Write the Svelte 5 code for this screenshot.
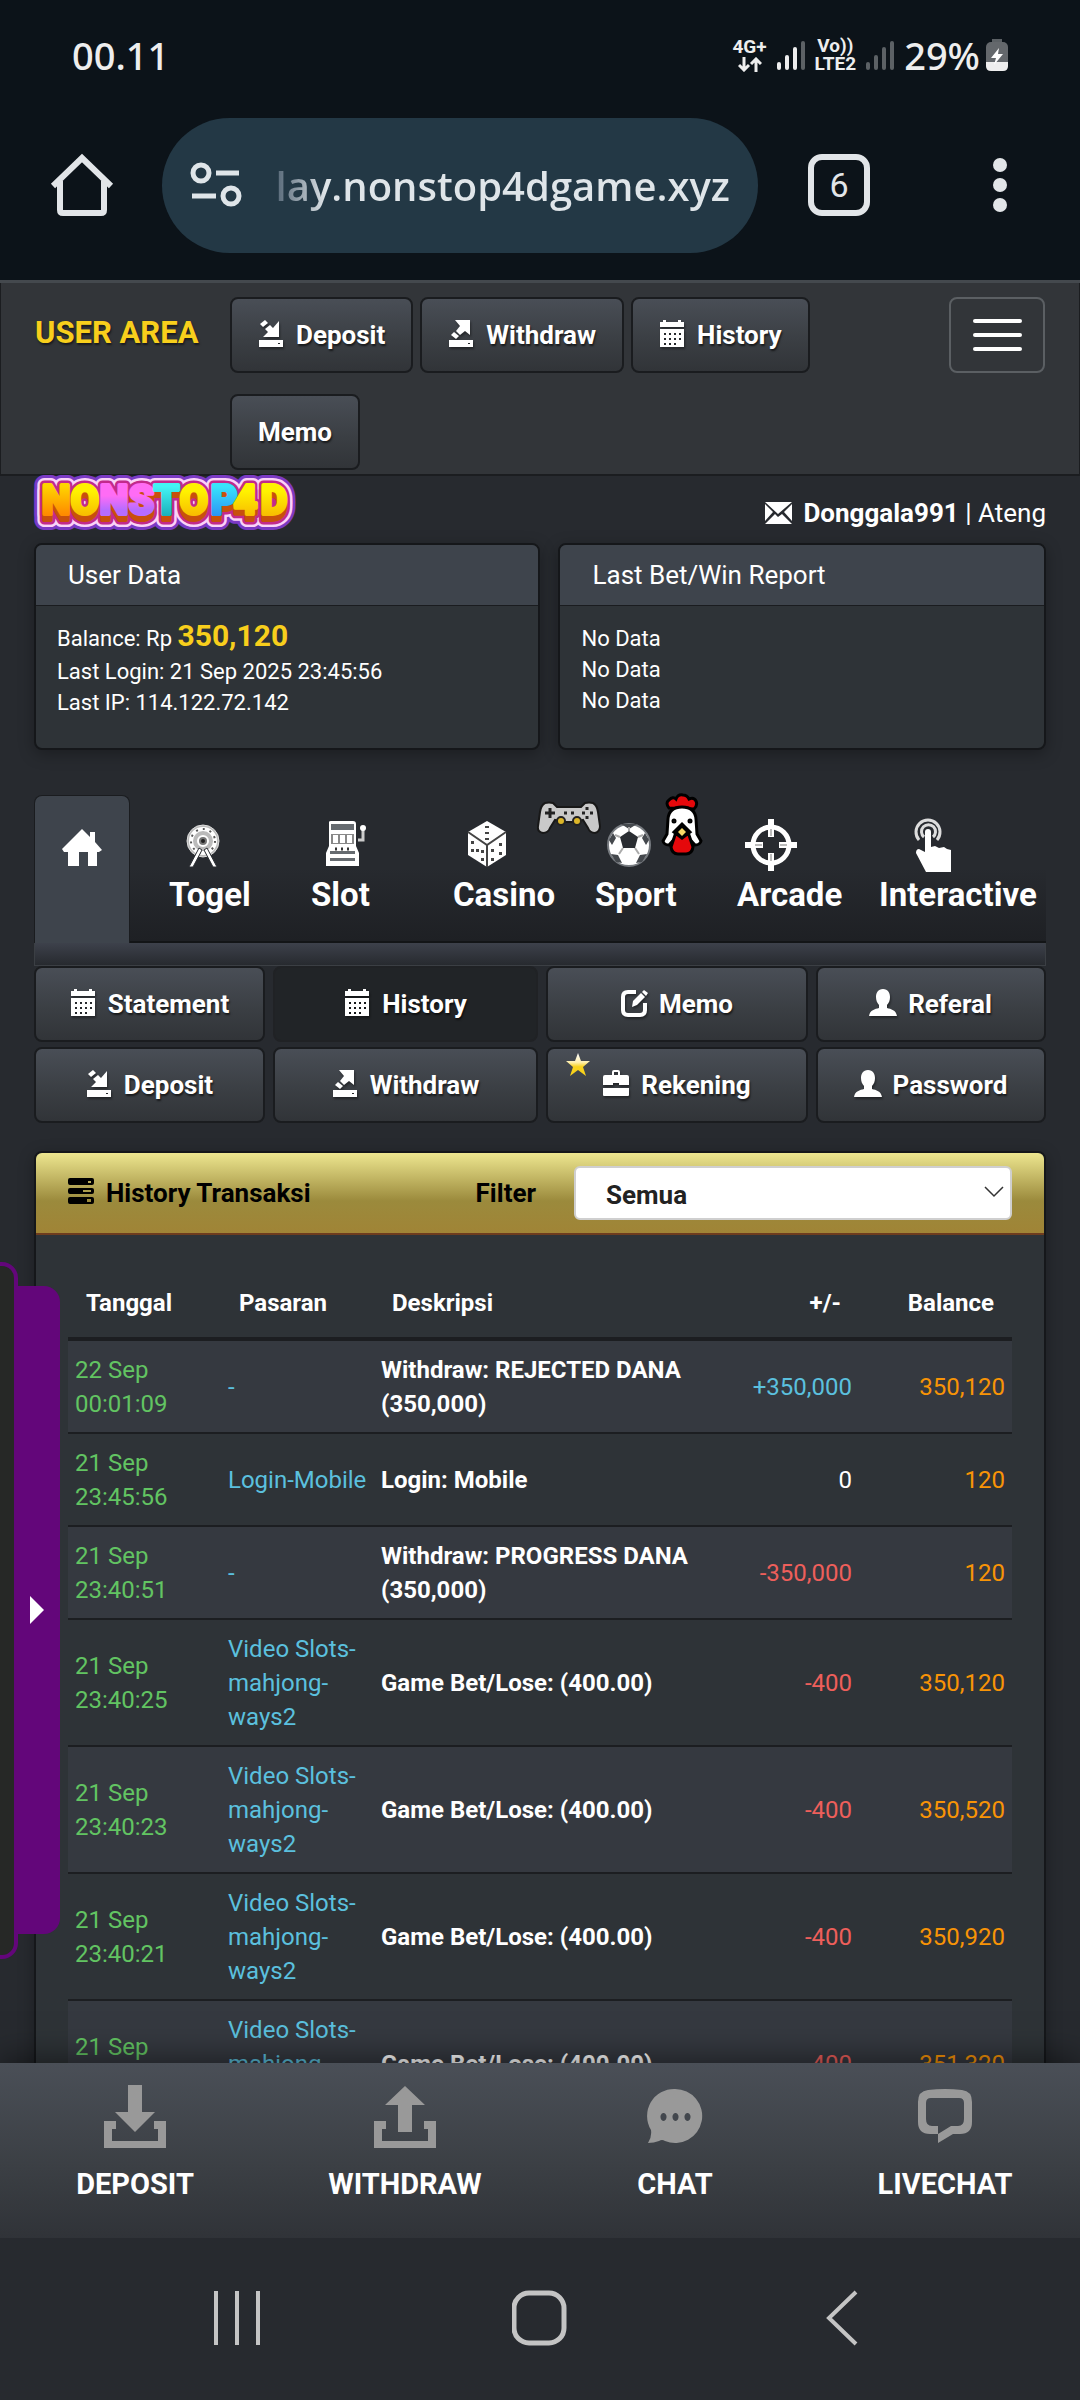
<script>
	// Quick links in the top bar
	const shortcuts = [
		{ label: 'Deposit', icon: 'deposit' },
		{ label: 'Withdraw', icon: 'withdraw' },
		{ label: 'History', icon: 'calendar' },
		{ label: 'Memo', icon: null }
	];

	const reports = ['No Data', 'No Data', 'No Data'];

	const categories = ['Togel', 'Slot', 'Casino', 'Sport', 'Arcade', 'Interactive'];

	const menu = [
		{ label: 'Statement', icon: 'calendar' },
		{ label: 'History', icon: 'calendar' },
		{ label: 'Memo', icon: 'edit' },
		{ label: 'Referal', icon: 'user' },
		{ label: 'Deposit', icon: 'deposit' },
		{ label: 'Withdraw', icon: 'withdraw' },
		{ label: 'Rekening', icon: 'case', starred: true },
		{ label: 'Password', icon: 'user' }
	];

	const transactions = [
		{ date: '22 Sep', time: '00:01:09', market: '-', text: 'Withdraw: REJECTED DANA (350,000)', amount: '+350,000', balance: '350,120' },
		{ date: '21 Sep', time: '23:45:56', market: 'Login-Mobile', text: 'Login: Mobile', amount: '0', balance: '120' },
		{ date: '21 Sep', time: '23:40:51', market: '-', text: 'Withdraw: PROGRESS DANA (350,000)', amount: '-350,000', balance: '120' },
		{ date: '21 Sep', time: '23:40:25', market: 'Video Slots-mahjong-ways2', text: 'Game Bet/Lose: (400.00)', amount: '-400', balance: '350,120' },
		{ date: '21 Sep', time: '23:40:23', market: 'Video Slots-mahjong-ways2', text: 'Game Bet/Lose: (400.00)', amount: '-400', balance: '350,520' },
		{ date: '21 Sep', time: '23:40:21', market: 'Video Slots-mahjong-ways2', text: 'Game Bet/Lose: (400.00)', amount: '-400', balance: '350,920' },
		{ date: '21 Sep', time: '23:40:19', market: 'Video Slots-mahjong-ways2', text: 'Game Bet/Lose: (400.00)', amount: '-400', balance: '351,320' }
	];

	const bottomLinks = ['DEPOSIT', 'WITHDRAW', 'CHAT', 'LIVECHAT'];

	let activeMenu = $state('History');
	let filter = $state('Semua');

	function amountClass(amount) {
		if (amount.startsWith('+')) return 'plus';
		if (amount.startsWith('-')) return 'minus';
		return '';
	}
</script>

{#snippet icon(name)}
	<svg class="icon" viewBox="0 0 26 28" aria-hidden="true">
		{#if name === 'deposit'}
			<path d="M21 1v16H5l5-5-3-3 5-4 3 3z" />
			<path d="M2 4l5-4 3 3-5 4z" />
			<path fill-rule="evenodd" d="M1 20h24v7H1zM20 23v1h2v-1z" />
		{:else if name === 'withdraw'}
			<path d="M7 0h15v15l-5-4-5 4-4-4 4-5z" />
			<path d="M6 12l5 4-3 3-5-4z" />
			<path fill-rule="evenodd" d="M1 20h24v7H1zM20 23v1h2v-1z" />
		{:else if name === 'calendar'}
			<path d="M4 0h3v2h12V0h3v2h3v5H1V2h3z" />
			<path fill-rule="evenodd" d="M1 9h24v18H1zM5 13v2h2v-2zM10 13v2h2v-2zM15 13v2h2v-2zM20 13v2h2v-2zM5 18v2h2v-2zM10 18v2h2v-2zM15 18v2h2v-2zM20 18v2h2v-2zM5 23v2h2v-2zM10 23v2h2v-2zM15 23v2h2v-2z" />
		{:else if name === 'edit'}
			<path d="M15 3H7Q2 3 2 8v13q0 5 5 5h12q5 0 5-5v-7" fill="none" stroke="currentColor" stroke-width="4" />
			<path d="M11 18l1-6L20 4l4 4-8 8zM21 3l2-2 4 3-2 3z" />
		{:else if name === 'user'}
			<path d="M13 0c5 0 7 4 7 8 0 3-1 6-3 8v3c4 1 9 2 10 8H-1c1-6 6-7 10-8v-3c-2-2-3-5-3-8 0-4 2-8 7-8z" />
		{:else if name === 'case'}
			<path fill-rule="evenodd" d="M9 5V2q0-2 2-2h4q2 0 2 2v3h7q2 0 2 2v8h-10v-2h-6v2H0V7q0-2 2-2zM11 2v3h4V2z" />
			<path d="M0 18h26v7q0 1-1 1H1q-1 0-1-1z" />
		{:else if name === 'server'}
			<path fill-rule="evenodd" d="M2 0h22q2 0 2 2v3q0 2-2 2H2Q0 7 0 5V2q0-2 2-2zM20 3v2h3V3z" />
			<path fill-rule="evenodd" d="M2 10h22q2 0 2 2v2q0 2-2 2H2q-2 0-2-2v-2q0-2 2-2zM15 12v2h8v-2z" />
			<path fill-rule="evenodd" d="M2 19h22q2 0 2 2v3q0 2-2 2H2q-2 0-2-2v-3q0-2 2-2zM19 21v3h4v-3z" />
		{/if}
	</svg>
{/snippet}

{#snippet signal(lit)}
	<svg class="signal" viewBox="0 0 28 30" aria-hidden="true">
		{#each [8, 15, 23, 29] as h, i}
			<rect x={i * 8} y={30 - h} width="4" height={h} rx="2" fill={i < lit ? '#eee' : '#5c6165'} />
		{/each}
	</svg>
{/snippet}

<div class="phone">
	<header class="status">
		<span class="clock">00.11</span>
		<div class="status-icons">
			<span class="network">
				4G+
				<svg viewBox="0 0 24 15" aria-hidden="true">
					<path d="M6 0v13M1 8l5 5 5-5M18 15V2M13 7l5-5 5 5" fill="none" stroke="#eee" stroke-width="3" />
				</svg>
			</span>
			{@render signal(3)}
			<span class="volte"><span>Vo))</span><span>LTE2</span></span>
			{@render signal(0)}
			<span class="charge">
				29%
				<svg class="battery" viewBox="0 0 22 32" aria-hidden="true">
					<path d="M6 0h10v4H6z" fill="#5c6165" />
					<rect y="3" width="22" height="28" rx="5" fill="#64686c" />
					<path d="M0 23h22v4q0 5-5 5H5q-5 0-5-5z" fill="#eee" />
					<path d="M13 9L5 19h5l-2 7 9-11h-5z" fill="#fff" />
				</svg>
			</span>
		</div>
	</header>

	<div class="browser">
		<button type="button" class="plain home" aria-label="Home">
			<svg width="64" height="64" viewBox="0 0 64 64" fill="none" stroke="#e2e5e8" stroke-width="6" aria-hidden="true">
				<path d="M3 33L32 5l29 28M10 28v29q0 3 3 3h38q3 0 3-3V28" />
			</svg>
		</button>
		<div class="address">
			<svg width="52" height="46" viewBox="0 0 52 46" fill="none" stroke="#dfe5e9" stroke-width="5" aria-hidden="true">
				<circle cx="11" cy="11" r="8" />
				<path d="M26 11h23M2 34h24" />
				<circle cx="41" cy="34" r="8" />
			</svg>
			<span class="url">lay.nonstop4dgame.xyz</span>
		</div>
		<button type="button" class="plain tab-count">6</button>
		<button type="button" class="plain dots" aria-label="More options">
			<svg width="16" height="56" viewBox="0 0 16 56" fill="#e2e5e8" aria-hidden="true">
				<circle cx="8" cy="8" r="7" /><circle cx="8" cy="28" r="7" /><circle cx="8" cy="48" r="7" />
			</svg>
		</button>
	</div>

	<main class="site">
		<nav class="topbar">
			<a class="brand" href="#top">USER AREA</a>
			<div class="shortcuts">
				{#each shortcuts as item}
					<button type="button" class="btn">
						{#if item.icon}{@render icon(item.icon)}{/if}
						{item.label}
					</button>
				{/each}
			</div>
			<button type="button" class="burger" aria-label="Menu">
				<span></span><span></span><span></span>
			</button>
		</nav>

		<div class="content">
			<div class="identity">
				<svg class="logo" viewBox="0 0 264 58" role="img" aria-label="NONSTOP4D">
					<defs>
						<linearGradient id="orange" x2="0" y2="1"><stop offset=".2" stop-color="#ffd400" /><stop offset=".8" stop-color="#ff8a00" /></linearGradient>
						<linearGradient id="yellow" x2="0" y2="1"><stop offset=".3" stop-color="#fff200" /><stop offset=".9" stop-color="#f7b500" /></linearGradient>
						<linearGradient id="violet" x2="0" y2="1"><stop offset=".4" stop-color="#ff6cf5" /><stop offset=".7" stop-color="#b66cff" /></linearGradient>
						<linearGradient id="teal" x2="0" y2="1"><stop offset=".2" stop-color="#43f4f4" /><stop offset=".9" stop-color="#16a9b4" /></linearGradient>
						<linearGradient id="blue" x2="0" y2="1"><stop offset=".2" stop-color="#38e4fb" /><stop offset=".9" stop-color="#2b8bf6" /></linearGradient>
					</defs>
					<g class="ring outer"><use href="#wordmark" y="6" /><use href="#wordmark" /></g>
					<g class="ring light"><use href="#wordmark" y="6" /><use href="#wordmark" /></g>
					<g class="ring pink"><use href="#wordmark" y="6" /><use href="#wordmark" /></g>
					<g class="depth"><use href="#wordmark" y="6" /><use href="#wordmark" y="3" /></g>
					<text id="wordmark" y="38" x="8 37 66 95 120 146 177 200 227"><tspan class="orange">N</tspan><tspan class="yellow">O</tspan><tspan class="violet">NS</tspan><tspan class="teal">T</tspan><tspan class="yellow">O</tspan><tspan class="blue">P</tspan><tspan class="yellow">4D</tspan></text>
				</svg>
				<div class="account">
					<svg width="27" height="22" viewBox="0 0 27 22" fill="#fff" aria-hidden="true">
						<path d="M0 0h27L13 12zM0 2l8 8-8 9zM27 2v17l-8-9zM0 22l10-10 3 3 4-3 10 10z" />
					</svg>
					<span><strong>Donggala991</strong> | Ateng</span>
				</div>
			</div>

			<div class="cards">
				<section class="card">
					<h2>User Data</h2>
					<div class="card-body">
						<p class="saldo">Balance: Rp <b>350,120</b></p>
						<p>Last Login: 21 Sep 2025 23:45:56</p>
						<p>Last IP: 114.122.72.142</p>
					</div>
				</section>
				<section class="card">
					<h2>Last Bet/Win Report</h2>
					<div class="card-body">
						{#each reports as report}
							<p>{report}</p>
						{/each}
					</div>
				</section>
			</div>

			<nav class="tabs">
				<a class="home-tab" href="#home" aria-label="Home">
					<svg width="40" height="38" viewBox="0 0 40 38" fill="#fff" aria-hidden="true">
						<path d="M20 0l8 8V3h5v10l7 8-3 2h-2v14h-9V23h-9v14H6V23H2l-2-3z" />
					</svg>
				</a>
				{#each categories as name}
					<a class="tab" href="#{name}">
						<svg width="100" height="60" viewBox="0 0 100 60" fill="#fff" aria-hidden="true">
							{#if name === 'Togel'}
								<circle cx="50" cy="26" r="16" fill="#bbb" stroke="#ddd" stroke-width="1" />
								<circle cx="50" cy="26" r="12" fill="none" stroke="#fff" stroke-width="4" />
								<circle cx="50" cy="26" r="12" fill="none" stroke="#555" stroke-width="2" stroke-dasharray="2 5" />
								<circle cx="50" cy="26" r="5" fill="#777" stroke="#fff" stroke-width="2" />
								<circle cx="50" cy="26" r="2" fill="#222" />
								<path d="M46 33l3 2-9 17h-4zM54 33l-3 2 9 17h4z" stroke="#2c2f34" />
							{:else if name === 'Slot'}
								<g transform="translate(-3 0)">
									<path d="M37 7q0-1 2-1h22q3 0 3 3v22l3 7v13H34V38l3-7z" />
									<path d="M39 9h23v6H39zM38 36h25v3H38zM38 43h25v3H38z" fill="#666b70" />
									<path d="M39 19h23v10H39z" fill="#888" />
									<path d="M41 20h5v8h-5zM48 20h5v8h-5zM55 20h5v8h-5z" />
									<path d="M43 34h2M49 34h2M55 34h2" stroke="#333" stroke-width="3" />
									<path d="M66 25h5V15" fill="none" stroke="#ccc" stroke-width="3" />
									<circle cx="71" cy="13" r="3" />
								</g>
							{:else if name === 'Casino'}
								<path d="M50 6l19 11v23L50 52 31 40V17z" />
								<path d="M31 17l19 13 19-13M50 30v22" fill="none" stroke="#444" stroke-width="2" />
								<path d="M48 11h4v2h-4zM48 17h4v2h-4zM48 23h4v2h-4zM34 26h3v3h-3zM34 34h3v3h-3zM39 34h3v3h-3zM44 35h3v3h-3zM44 43h3v3h-3zM54 34h3v3h-3zM54 43h3v3h-3zM62 28h3v3h-3zM62 37h3v3h-3z" fill="#444" />
							{:else if name === 'Sport'}
								<circle cx="50" cy="30" r="21" stroke="#777b80" stroke-width="2" />
								<path d="M50 16l9 6-3 11H44l-3-11z" fill="#2a2d32" />
								<path d="M42 9h16l-8 5zM30 25l4-7 3 5-4 7zM70 25l-4-7-3 5 4 7zM32 39l7 1 4 8-6-1zM68 39l-7 1-4 8 6-1z" fill="#44484d" />
								<path d="M50 16v-4M59 22l5-2M56 33l4 6M44 33l-4 6M41 22l-5-2" stroke="#aaa" stroke-width="2" />
							{:else if name === 'Arcade'}
								<circle cx="50" cy="30" r="18" fill="none" stroke="#fff" stroke-width="5" />
								<path d="M50 4v18M50 38v18M24 30h18M58 30h18" stroke="#fff" stroke-width="6" />
								<path d="M50 14v7M50 39v7M34 30h7M59 30h7" stroke="#bbb" stroke-width="2" />
							{:else}
								<path d="M59 25a12 12 0 1 1 18 0M64 22a7 7 0 1 1 9 0" fill="none" stroke="#ddd" stroke-width="3" transform="translate(-3 0)" />
								<path d="M62 17q0-3 3-3t3 3v15l4-1 4 2 5-1 3 2 4 1v22H63L53 38q0-4 3-4l6 3z" />
							{/if}
						</svg>
						<span>{name}</span>
						{#if name === 'Sport'}
							<svg class="gamepad" viewBox="0 0 64 34" aria-hidden="true">
								<path d="M8 2q4-1 8 0l4 4h24l4-4q4-1 8 0 4 2 5 9l2 14q0 6-5 7-5 0-7-5l-5-8-8 2h-12l-8-2-5 8q-2 5-7 5-6-1-5-7l2-14q1-7 5-9z" fill="#c9c9c9" stroke="#181818" stroke-width="2" />
								<path d="M13 7v10M8 12h10M27 12h3M34 12h3" stroke="#222" stroke-width="3" />
								<path d="M50 6v3M50 15v3M45 12h3M53 12h3" stroke="#222" stroke-width="3" />
								<circle cx="24" cy="20" r="4" fill="#dcb629" stroke="#222" stroke-width="2" />
								<circle cx="40" cy="20" r="4" fill="#dcb629" stroke="#222" stroke-width="2" />
							</svg>
							<svg class="chicken" viewBox="0 0 42 64" stroke="#000" stroke-width="3" aria-hidden="true">
								<path d="M8 15q-4-5 0-8 4-4 7-1 2-5 7-4 4 0 6 4 5-2 7 2 2 4-2 8z" fill="#e5080b" />
								<path d="M7 26q1-12 14-12t14 12l1 15 4 7q-1 4-6 4L21 38 8 52q-5 0-6-4l4-7z" fill="#fff" />
								<path d="M14 42q7-6 14 0l4 12q-1 7-7 7h-8q-6 0-7-7z" fill="#e5080b" />
								<path d="M21 31l8 8-8 6-8-6z" />
								<path d="M21 35l4 4-4 4-4-4z" fill="#f7d967" stroke="none" />
								<circle cx="13" cy="28" r="1" /><circle cx="29" cy="28" r="1" />
							</svg>
						{/if}
					</a>
				{/each}
			</nav>
			<div class="tab-strip"></div>

			<div class="menu">
				{#each menu as item}
					<button type="button" class="btn" class:active={activeMenu === item.label} onclick={() => (activeMenu = item.label)}>
						{@render icon(item.icon)}
						{item.label}
						{#if item.starred}
							<svg class="star" viewBox="0 0 26 26" aria-hidden="true">
								<defs><linearGradient id="gold" x2="0" y2="1"><stop stop-color="#fff" /><stop offset=".4" stop-color="#fff0b0" /><stop offset=".6" stop-color="#f8d21c" /></linearGradient></defs>
								<path d="M13 1l3 8h9l-7 6 3 9-8-6-8 6 3-9-7-6h9z" fill="url(#gold)" />
							</svg>
						{/if}
					</button>
				{/each}
			</div>

			<section class="history">
				<div class="history-head">
					<h2>{@render icon('server')}History Transaksi</h2>
					<label for="filter">Filter</label>
					<div class="select">
						<select id="filter" bind:value={filter}>
							<option>Semua</option>
						</select>
						<svg width="20" height="12" viewBox="0 0 20 12" aria-hidden="true">
							<path d="M1 1l9 9 9-9" fill="none" stroke="#333" stroke-width="1.5" />
						</svg>
					</div>
				</div>
				<div class="history-body">
					<table>
						<thead>
							<tr>
								<th>Tanggal</th>
								<th>Pasaran</th>
								<th class="wide">Deskripsi</th>
								<th class="num">+/-</th>
								<th class="num">Balance</th>
							</tr>
						</thead>
						<tbody>
							{#each transactions as row}
								<tr>
									<td class="date">{row.date}<br />{row.time}</td>
									<td class="market">{row.market}</td>
									<td class="text">{row.text}</td>
									<td class="num {amountClass(row.amount)}">{row.amount}</td>
									<td class="num balance">{row.balance}</td>
								</tr>
							{/each}
						</tbody>
					</table>
				</div>
			</section>
		</div>

		<aside class="drawer">
			<button type="button" aria-label="Open panel"></button>
		</aside>
	</main>

	<nav class="bottom">
		{#each bottomLinks as name}
			<a href="#{name}">
				<svg width="62" height="64" viewBox="0 0 62 64" fill="#999" aria-hidden="true">
					{#if name === 'DEPOSIT'}
						<path d="M24 0h14v27h13L31 47 11 27h13zM0 36h12v8H8v12h46V44h-4v-8h12v27H0z" />
					{:else if name === 'WITHDRAW'}
						<path d="M31 1l20 19H38v27H24V20H11zM0 36h12v8H8v12h46V44h-4v-8h12v27H0z" />
					{:else if name === 'CHAT'}
						<path fill-rule="evenodd" d="M31 4a27 27 0 1 1-10 52q-3-2-6 0-5 2-11 2 4-6 3-13A27 27 0 0 1 31 4zM19 28a3 4 0 1 0 1 0zM31 28a3 4 0 1 0 1 0zM43 28a3 4 0 1 0 1 0z" />
					{:else}
						<path fill-rule="evenodd" d="M14 5q17-2 34 0 10 1 10 12v20q0 12-12 12h-7l-15 9v-9h-8Q4 49 4 37V17Q4 6 14 5zM17 13q-5 0-5 5v16q0 7 6 7h6v8l13-8h7q6 0 6-7V18q0-5-5-5z" />
					{/if}
				</svg>
				{name}
			</a>
		{/each}
	</nav>

	<footer class="system">
		<button type="button" class="plain" aria-label="Recent apps">
			<svg width="56" height="56" viewBox="0 0 56 56" stroke="#c4c4c4" stroke-width="4" aria-hidden="true">
				<path d="M6 1v54M27 1v54M48 1v54" />
			</svg>
		</button>
		<button type="button" class="plain" aria-label="Home screen">
			<svg width="56" height="56" viewBox="0 0 56 56" aria-hidden="true">
				<rect x="2" y="3" width="50" height="50" rx="15" fill="none" stroke="#c4c4c4" stroke-width="5" />
			</svg>
		</button>
		<button type="button" class="plain" aria-label="Back">
			<svg width="56" height="56" viewBox="0 0 56 56" aria-hidden="true">
				<path d="M42 2L15 28l27 26" fill="none" stroke="#c4c4c4" stroke-width="4" />
			</svg>
		</button>
	</footer>
</div>

<style>
	:global(body) {
		background: #272a2f;
	}

	.phone {
		display: flex;
		flex-direction: column;
		height: 100vh;
		overflow: hidden;
		font-family: Roboto, 'Liberation Sans', sans-serif;
		font-size: 24px;
		color: #fff;
	}

	.phone * {
		box-sizing: border-box;
	}

	svg {
		display: block;
		flex: none;
	}

	button,
	select {
		font: inherit;
		color: inherit;
	}

	a {
		color: inherit;
		text-decoration: none;
	}

	h2,
	p {
		margin: 0;
	}

	.plain {
		display: flex;
		align-items: center;
		justify-content: center;
		padding: 0;
		border: none;
		background: none;
	}

	/* Status bar */
	.status {
		display: flex;
		justify-content: space-between;
		align-items: center;
		height: 110px;
		padding: 0 72px;
		background: #0c1319;
		color: #eee;
	}

	.clock,
	.charge {
		font-family: 'Noto Sans', sans-serif;
		font-size: 38px;
		font-weight: 500;
	}

	.charge {
		display: flex;
		align-items: center;
		gap: 6px;
	}

	.status-icons {
		display: flex;
		align-items: center;
		gap: 10px;
	}

	.network,
	.volte {
		font-size: 19px;
		line-height: 18px;
		font-weight: 700;
		text-align: center;
	}

	.volte {
		display: grid;
	}

	.network svg {
		width: 24px;
		height: 15px;
		margin: 1px auto 0;
	}

	.signal {
		width: 28px;
		height: 30px;
	}

	.battery {
		width: 22px;
		height: 32px;
	}

	/* Browser bar */
	.browser {
		display: flex;
		align-items: center;
		height: 173px;
		padding: 0 72px 20px 50px;
		background: #0c1319;
		border-bottom: 3px solid #44494e;
	}

	.address {
		display: flex;
		align-items: center;
		flex: 1;
		height: 135px;
		margin: 0 50px 0 48px;
		padding: 0 28px;
		border-radius: 68px;
		background: #233845;
		min-width: 0;
	}

	.url {
		flex: 1;
		margin-left: 28px;
		overflow: hidden;
		white-space: nowrap;
		text-align: right;
		font-family: 'Open Sans', 'Noto Sans', sans-serif;
		font-size: 40px;
		font-weight: 600;
		color: transparent;
		background: linear-gradient(90deg, #46596a, #dfe5e9 56px);
		background-clip: text;
	}

	.tab-count {
		width: 62px;
		height: 62px;
		border: 6px solid #e2e5e8;
		border-radius: 14px;
		color: #e2e5e8;
		font-size: 34px;
	}

	.dots {
		margin-left: 122px;
	}

	/* Site */
	.site {
		position: relative;
		flex: 1;
		min-height: 0;
		overflow: hidden;
		background: #272a2f;
	}

	.topbar {
		display: flex;
		align-items: flex-start;
		padding: 14px 34px 4px;
		background: #323539;
		border: 1px solid #1b1d20;
		border-top: none;
		border-bottom-width: 2px;
	}

	.brand {
		width: 195px;
		line-height: 72px;
		font-size: 31px;
		font-weight: 700;
		color: #f8cf1c;
		text-shadow: 1px 2px 2px rgba(0, 0, 0, 0.5);
	}

	.shortcuts {
		display: flex;
		flex-wrap: wrap;
		flex: 1;
		gap: 21px 7px;
		margin-right: 10px;
	}

	.btn {
		position: relative;
		display: flex;
		align-items: center;
		justify-content: center;
		gap: 12px;
		height: 76px;
		padding: 0 26px;
		border: 2px solid #1a1c1f;
		border-radius: 8px;
		background: linear-gradient(#494e56, #3b3f44 55%, #313438);
		font-size: 26px;
		font-weight: 700;
		text-shadow: 1px 2px 2px rgba(0, 0, 0, 0.6);
	}

	.btn.active {
		background: #212427;
		border-color: #202225;
	}

	.icon {
		width: 26px;
		height: 28px;
		margin-bottom: 3px;
		fill: currentColor;
		overflow: visible;
	}

	.btn .icon {
		filter: drop-shadow(1px 2px 1px rgba(0, 0, 0, 0.4));
	}

	.burger {
		display: flex;
		flex-direction: column;
		justify-content: center;
		align-items: center;
		gap: 10px;
		width: 96px;
		height: 76px;
		border: 2px solid #5b5f63;
		border-radius: 8px;
		background: none;
	}

	.burger span {
		width: 49px;
		height: 4px;
		border-radius: 2px;
		background: #fff;
	}

	.content {
		padding: 0 34px;
	}

	.identity {
		display: flex;
		justify-content: space-between;
		height: 67px;
	}

	.logo {
		width: 264px;
		height: 58px;
		overflow: visible;
		font-size: 40px;
		font-weight: 800;
		stroke-linejoin: round;
		stroke-width: 4px;
	}

	.ring {
		stroke: var(--ink);
	}

	.outer {
		--ink: #7b3ac4;
		stroke-width: 20px;
	}

	.light {
		--ink: #fbd3f8;
		stroke-width: 14px;
	}

	.pink {
		--ink: #c22a8c;
		stroke-width: 9px;
	}

	.depth {
		--ink: #c8500c;
	}

	.orange {
		fill: var(--ink, url(#orange));
		stroke: var(--ink, url(#orange));
	}

	.yellow {
		fill: var(--ink, url(#yellow));
		stroke: var(--ink, url(#yellow));
	}

	.violet {
		fill: var(--ink, url(#violet));
		stroke: var(--ink, url(#violet));
	}

	.teal {
		fill: var(--ink, url(#teal));
		stroke: var(--ink, url(#teal));
	}

	.blue {
		fill: var(--ink, url(#blue));
		stroke: var(--ink, url(#blue));
	}

	.account {
		display: flex;
		align-items: center;
		gap: 11px;
		padding-top: 6px;
		font-size: 26px;
	}

	.cards {
		display: grid;
		grid-template-columns: 507fr 488fr;
		gap: 18px;
	}

	.card {
		height: 207px;
		border: 2px solid #15171a;
		border-radius: 8px;
		background: #2e3337;
		box-shadow: 0 4px 16px rgba(0, 0, 0, 0.3);
		overflow: hidden;
	}

	.card h2 {
		height: 61px;
		padding-left: 32px;
		line-height: 60px;
		border-bottom: 1px solid #1a1c1f;
		background: #3e444c;
		font-size: 26px;
		font-weight: 400;
	}

	.card-body {
		padding: 17px 21px;
		font-size: 22px;
		line-height: 31px;
	}

	.card-body b {
		font-size: 30px;
		line-height: 24px;
		color: #f8cf1c;
	}

	.saldo {
		margin-bottom: 2px;
	}

	/* Category tabs */
	.tabs {
		display: flex;
		height: 148px;
		margin-top: 45px;
		background: linear-gradient(transparent 50%, #1e2024);
		border-bottom: 2px solid #131517;
	}

	.home-tab {
		display: flex;
		justify-content: center;
		width: 96px;
		height: 148px;
		padding-top: 33px;
		border: 1px solid #1a1c1f;
		border-bottom: none;
		border-radius: 8px 8px 0 0;
		background: #3e444c;
	}

	.tab {
		position: relative;
		flex: 0 0 142px;
		padding-top: 20px;
		font-size: 33px;
		font-weight: 700;
		line-height: 40px;
	}

	.home-tab + .tab {
		margin-left: 23px;
	}

	.tab span {
		display: block;
		padding-left: 16px;
	}

	.gamepad {
		position: absolute;
		left: -42px;
		top: 6px;
		width: 64px;
		height: 34px;
	}

	.chicken {
		position: absolute;
		left: 82px;
		top: -2px;
		width: 42px;
		height: 64px;
	}

	.tab-strip {
		height: 23px;
		border: 1px solid #3b3f44;
		border-top: none;
		background: linear-gradient(#3d414b, #272a2f);
	}

	.menu {
		display: grid;
		grid-template-columns: 231fr 265fr 262fr 230fr;
		gap: 5px 8px;
	}

	.menu .btn {
		padding: 0;
	}

	.star {
		position: absolute;
		left: 17px;
		top: 3px;
		width: 26px;
		height: 26px;
	}

	/* Transactions */
	.history {
		margin-top: 28px;
		border: 2px solid #15171a;
		border-radius: 8px 8px 0 0;
		background: #2e3337;
		box-shadow: 0 4px 16px rgba(0, 0, 0, 0.3);
	}

	.history-head {
		display: flex;
		align-items: center;
		height: 82px;
		padding: 0 32px;
		border-bottom: 2px solid #6e3c1e;
		border-radius: 6px 6px 0 0;
		background: linear-gradient(#ede68f, #9b8a3c 60%, #a08436);
		color: #000;
		font-size: 26px;
		font-weight: 700;
	}

	.history-head h2 {
		display: flex;
		align-items: center;
		flex: 1;
		gap: 12px;
		font-size: inherit;
		font-weight: inherit;
	}

	.select {
		position: relative;
		width: 438px;
		margin-left: 38px;
	}

	.select select {
		width: 100%;
		height: 54px;
		padding: 4px 30px 0;
		appearance: none;
		border: 2px solid #cfcfcf;
		border-radius: 6px;
		background: #fff;
		color: #222;
	}

	.select svg {
		position: absolute;
		right: 8px;
		top: 20px;
	}

	.history-body {
		padding: 33px 32px 0;
	}

	table {
		width: 100%;
		table-layout: fixed;
		border-collapse: separate;
		border-spacing: 0;
		line-height: 34px;
	}

	th {
		width: 153px;
		height: 73px;
		padding: 0 18px;
		border-bottom: 4px solid #1c1e21;
		text-align: left;
		font-weight: 700;
	}

	th.wide {
		width: auto;
	}

	td {
		padding: 12px 7px 11px;
		border-bottom: 2px solid #1c1e21;
	}

	tbody tr:nth-child(odd) {
		background: #353940;
	}

	.num {
		text-align: right;
	}

	.date {
		color: #62c462;
	}

	.market,
	.plus {
		color: #5bc0de;
	}

	.text {
		font-weight: 700;
	}

	.minus {
		color: #ee5f5b;
	}

	.balance {
		color: #f89406;
	}

	/* Slide-out panel at the left edge */
	.drawer {
		position: absolute;
		left: -20px;
		top: 979px;
		width: 38px;
		height: 697px;
		border: 4px solid #63067a;
		border-radius: 16px;
		background: #262826;
	}

	.drawer button {
		position: absolute;
		left: 30px;
		top: 20px;
		width: 46px;
		height: 648px;
		padding: 0;
		border: none;
		border-radius: 0 16px 16px 0;
		background: #63067a;
	}

	.drawer button::after {
		content: '';
		display: block;
		width: 0;
		margin-left: 16px;
		border: 14px solid transparent;
		border-left-color: #fff;
		border-right: none;
	}

	/* Bottom navigation */
	.bottom {
		position: relative;
		display: flex;
		height: 175px;
		background: linear-gradient(#4a4f57, #3b3f44 60%, #303338);
		box-shadow: 0 -4px 32px rgba(0, 0, 0, 0.5);
	}

	.bottom a {
		display: flex;
		flex-direction: column;
		align-items: center;
		flex: 1;
		gap: 18px;
		padding-top: 22px;
		font-size: 29px;
		font-weight: 700;
	}

	.system {
		position: relative;
		display: flex;
		justify-content: space-between;
		align-items: center;
		height: 162px;
		padding: 0 210px 2px;
		background: #272a2f;
	}
</style>
